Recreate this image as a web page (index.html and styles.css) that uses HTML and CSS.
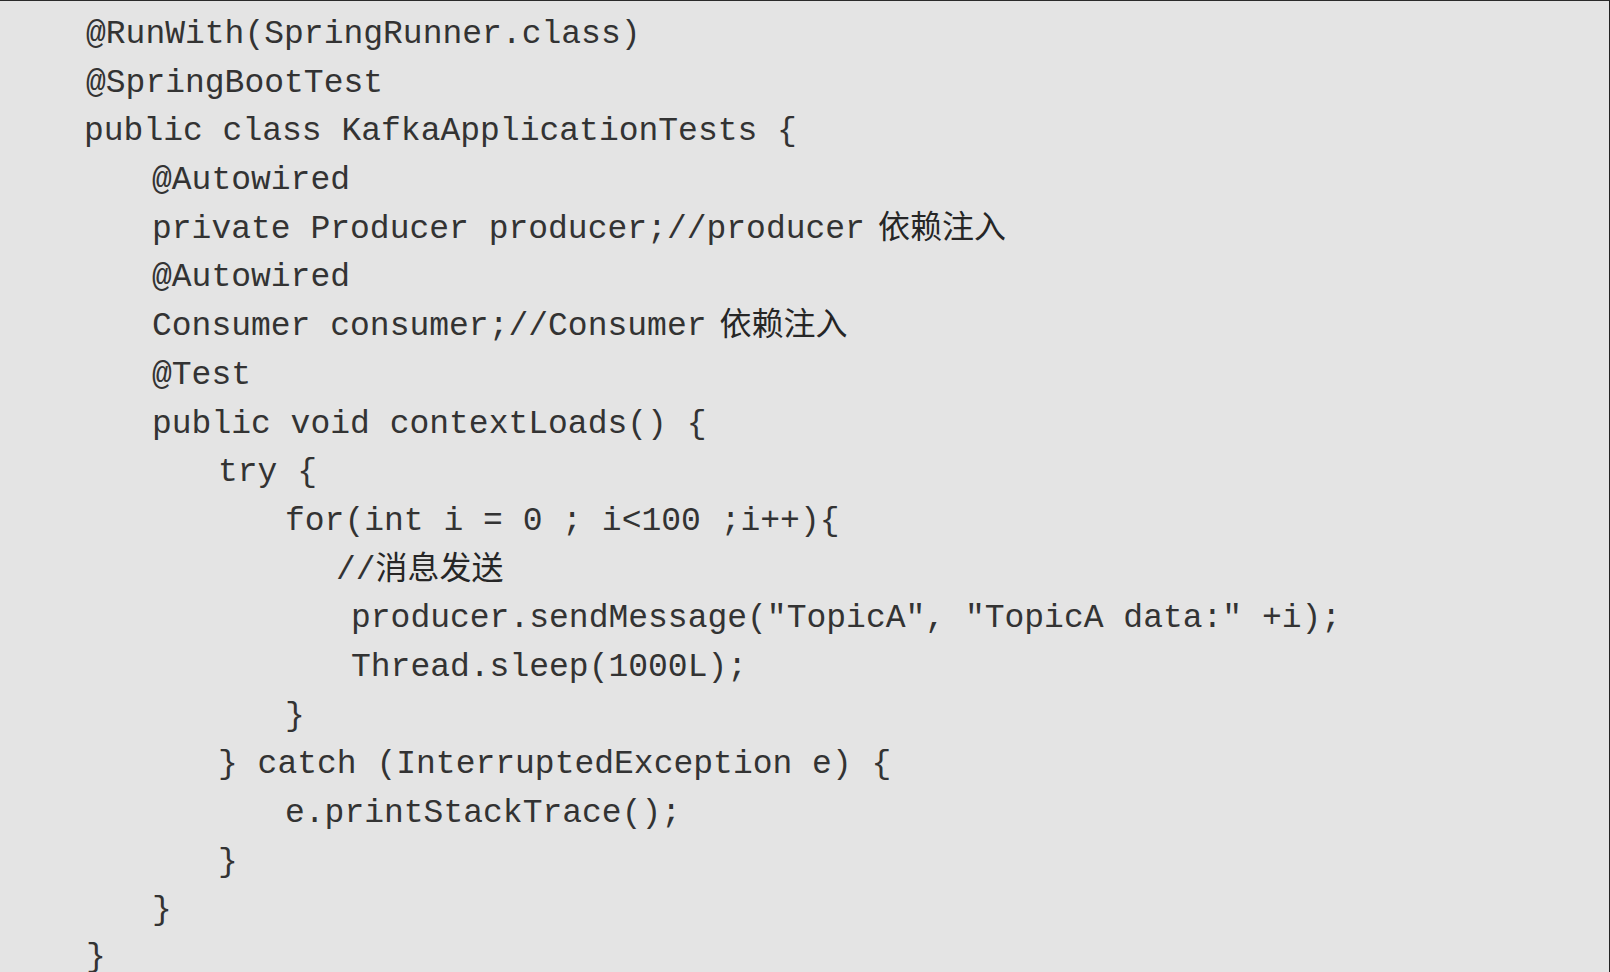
FILE: index.html
```html
<!DOCTYPE html>
<html lang="zh-CN">
<head>
<meta charset="utf-8">
<title>KafkaApplicationTests</title>
<link rel="stylesheet" href="styles.css">
</head>
<body>
<main class="page">
  <div class="code">
    <div class="line l0">@RunWith(SpringRunner.class)</div>
    <div class="line l0">@SpringBootTest</div>
    <div class="line l0 pub">public class KafkaApplicationTests {</div>
    <div class="line l1">@Autowired</div>
    <div class="line l1">private Producer producer;//producer<span class="zh zh-gap">依赖注入</span></div>
    <div class="line l1">@Autowired</div>
    <div class="line l1">Consumer consumer;//Consumer<span class="zh zh-gap">依赖注入</span></div>
    <div class="line l1">@Test</div>
    <div class="line l1">public void contextLoads() {</div>
    <div class="line l2">try {</div>
    <div class="line l3">for(int i = 0 ; i&lt;100 ;i++){</div>
    <div class="line lc">//<span class="zh">消息发送</span></div>
    <div class="line l4">producer.sendMessage("TopicA", "TopicA data:" +i);</div>
    <div class="line l4">Thread.sleep(1000L);</div>
    <div class="line l3">}</div>
    <div class="line l2">} catch (InterruptedException e) {</div>
    <div class="line l3">e.printStackTrace();</div>
    <div class="line l2">}</div>
    <div class="line l1">}</div>
    <div class="line l0 last">}</div>
  </div>
</main>
</body>
</html>
```
FILE: styles.css
```css
html, body {
  margin: 0;
  padding: 0;
  background: #e4e4e4;
}

.page {
  width: 1610px;
  height: 972px;
  box-sizing: border-box;
  background: #e4e4e4;
  border-top: 1px solid #2a2a2a;
  border-right: 1px solid #222;
  overflow: hidden;
}

.code {
  padding-top: 10px;
  font-family: "Liberation Mono", "Courier New", monospace;
  font-size: 33px;
  line-height: 48.7px;
  color: #333;
}

.line {
  height: 48.7px;
  white-space: pre;
}

.last {
  height: auto;
  line-height: 36px;
  padding-top: 4px;
}

.l0 { padding-left: 86px; }
.pub { padding-left: 84px; }
.l1 { padding-left: 152px; }
.l2 { padding-left: 218px; }
.l3 { padding-left: 285px; }
.lc { padding-left: 336px; }
.l4 { padding-left: 351px; }

.zh {
  font-family: "Noto Sans CJK SC", "Noto Sans", sans-serif;
  font-size: 32px;
  line-height: 1;
  color: #262626;
}

.zh-gap { margin-left: 13px; }
```
